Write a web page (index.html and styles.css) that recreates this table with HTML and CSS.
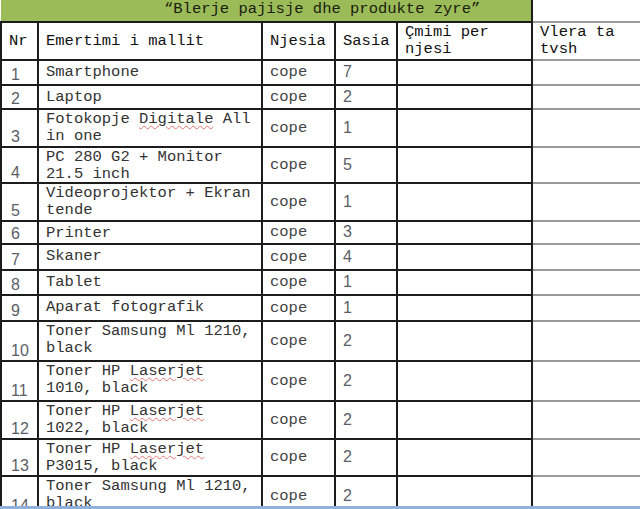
FILE: index.html
```html
<!DOCTYPE html>
<html lang="sq">
<head>
<meta charset="utf-8">
<title>Blerje pajisje dhe produkte zyre</title>
<link rel="stylesheet" href="styles.css">
</head>
<body>
<div class="page">
<table class="sheet">
  <colgroup>
    <col class="c-nr"><col class="c-name"><col class="c-unit"><col class="c-qty"><col class="c-price"><col class="c-vat">
  </colgroup>
  <tr class="title-row">
    <td class="title" colspan="5">“Blerje pajisje dhe produkte zyre”</td>
    <td class="title-blank"></td>
  </tr>
  <tr class="head r38">
    <th>Nr</th><th>Emertimi i mallit</th><th>Njesia</th><th>Sasia</th><th class="top">Çmimi per njesi</th><th class="vat top">Vlera ta tvsh</th>
  </tr>
  <tr class="r25"><td class="nr">1</td><td class="name one">Smartphone</td><td class="unit">cope</td><td class="qty">7</td><td></td><td class="vat"></td></tr>
  <tr class="r24"><td class="nr">2</td><td class="name one">Laptop</td><td class="unit">cope</td><td class="qty">2</td><td></td><td class="vat"></td></tr>
  <tr class="r38"><td class="nr">3</td><td class="name">Fotokopje <span class="sp">Digitale</span> All in one</td><td class="unit">cope</td><td class="qty">1</td><td></td><td class="vat"></td></tr>
  <tr class="r36"><td class="nr">4</td><td class="name">PC 280 G2 + Monitor 21.5 inch</td><td class="unit">cope</td><td class="qty">5</td><td></td><td class="vat"></td></tr>
  <tr class="r38"><td class="nr">5</td><td class="name">Videoprojektor + Ekran tende</td><td class="unit">cope</td><td class="qty">1</td><td></td><td class="vat"></td></tr>
  <tr class="r23"><td class="nr">6</td><td class="name one">Printer</td><td class="unit">cope</td><td class="qty">3</td><td></td><td class="vat"></td></tr>
  <tr class="r26"><td class="nr">7</td><td class="name one">Skaner</td><td class="unit">cope</td><td class="qty">4</td><td></td><td class="vat"></td></tr>
  <tr class="r25"><td class="nr">8</td><td class="name one">Tablet</td><td class="unit">cope</td><td class="qty">1</td><td></td><td class="vat"></td></tr>
  <tr class="r26"><td class="nr">9</td><td class="name one">Aparat fotografik</td><td class="unit">cope</td><td class="qty">1</td><td></td><td class="vat"></td></tr>
  <tr class="r40"><td class="nr">10</td><td class="name">Toner Samsung Ml 1210, black</td><td class="unit">cope</td><td class="qty">2</td><td></td><td class="vat"></td></tr>
  <tr class="r40"><td class="nr">11</td><td class="name">Toner HP <span class="sp">Laserjet</span> 1010, black</td><td class="unit">cope</td><td class="qty">2</td><td></td><td class="vat"></td></tr>
  <tr class="r38"><td class="nr">12</td><td class="name">Toner HP <span class="sp">Laserjet</span> 1022, black</td><td class="unit">cope</td><td class="qty">2</td><td></td><td class="vat"></td></tr>
  <tr class="r37"><td class="nr">13</td><td class="name">Toner HP <span class="sp">Laserjet</span> P3015, black</td><td class="unit">cope</td><td class="qty">2</td><td></td><td class="vat"></td></tr>
  <tr class="r40"><td class="nr">14</td><td class="name">Toner Samsung Ml 1210, black</td><td class="unit">cope</td><td class="qty">2</td><td></td><td class="vat"></td></tr>
</table>
</div>
<div class="window-edge"></div>
</body>
</html>
```
FILE: styles.css
```css
html, body {
  margin: 0;
  padding: 0;
  background: #ffffff;
  overflow: hidden;
  width: 640px;
  height: 509px;
}

.page {
  width: 640px;
  height: 509px;
  overflow: hidden;
}

.sheet {
  border-collapse: collapse;
  table-layout: fixed;
  width: 651px;
  margin-left: 0;
  font-family: "Liberation Mono", "Courier New", monospace;
  font-size: 15.5px;
  line-height: 16.5px;
  color: #333333;
}

.c-nr { width: 37px; }
.c-name { width: 224px; }
.c-unit { width: 73px; }
.c-qty { width: 62px; }
.c-price { width: 135px; }
.c-vat { width: 120px; }

.sheet th,
.sheet td {
  border: 2px solid #1c1c1c;
  padding: 0 2px 0 7px;
  text-align: left;
  vertical-align: middle;
  overflow: hidden;
}

.title-row { height: 22px; }

.sheet .title {
  background: #9bbb59;
  border-top: none;
  border-left: none;
  color: #1a200e;
  padding: 0 0 2px 163px;
  white-space: nowrap;
  font-weight: normal;
}

.sheet .title-blank {
  border: none;
  background: #ffffff;
}

.head th {
  font-weight: normal;
  color: #111111;
}

.sheet .top {
  vertical-align: top;
  padding-top: 1px;
}

.sheet .vat {
  border-top-color: #9a9a9a;
  border-bottom-color: #9a9a9a;
  border-right: none;
}

.sheet .nr {
  font-family: "Liberation Sans", Arial, sans-serif;
  font-size: 16px;
  line-height: 18px;
  color: #5a5e66;
  vertical-align: bottom;
  padding-left: 9px;
  padding-right: 0;
  padding-bottom: 0;
}

.sheet .name {
  vertical-align: top;
  padding-top: 1px;
  padding-right: 10px;
}

.sheet .name.one {
  padding-top: 3px;
}

.sheet .unit {
  color: #444444;
}

.sheet .qty {
  font-family: "Liberation Sans", Arial, sans-serif;
  font-size: 16px;
  color: #5a5e66;
}

.sp {
  text-decoration: underline wavy #e57373;
  text-decoration-thickness: 1px;
  text-underline-offset: 2px;
}

.r23 { height: 23px; }
.r24 { height: 24px; }
.r25 { height: 25px; }
.r26 { height: 26px; }
.r36 { height: 36px; }
.r37 { height: 37px; }
.r38 { height: 38px; }
.r40 { height: 40px; }

.window-edge {
  position: fixed;
  left: 0;
  right: 0;
  top: 506px;
  height: 3px;
  background: #8fb1dc;
}
```
